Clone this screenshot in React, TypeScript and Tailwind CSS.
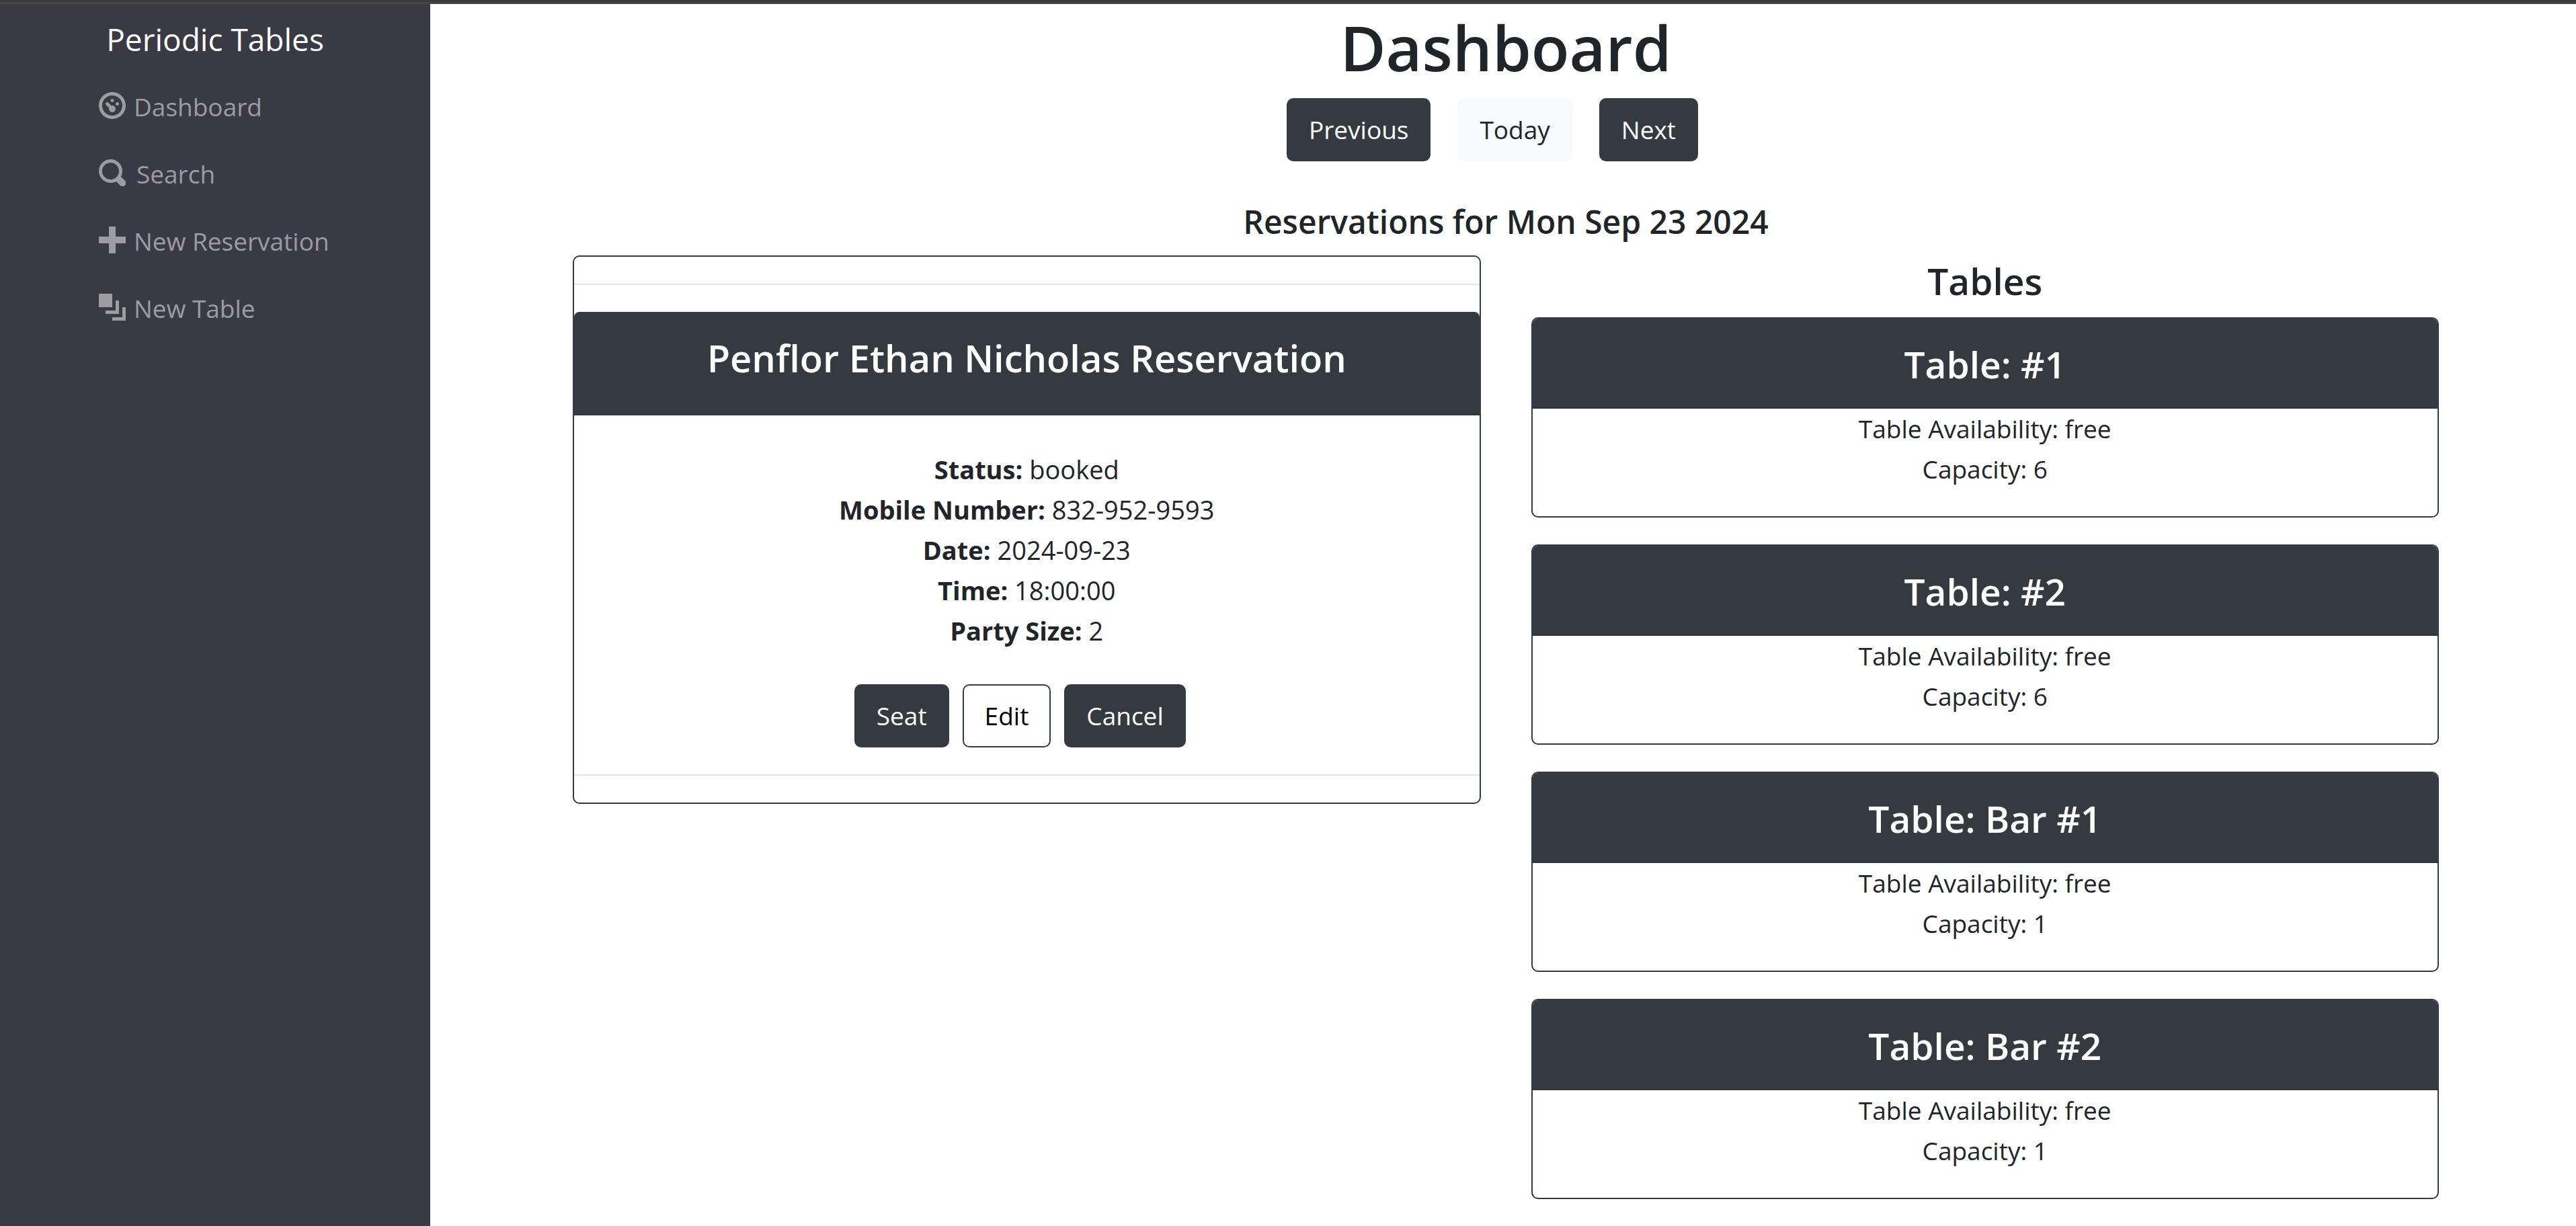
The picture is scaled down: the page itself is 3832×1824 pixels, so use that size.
import React from "react";

type IconProps = { children: React.ReactNode };

function Icon({ children }: IconProps) {
  return (
    <svg viewBox="0 0 8 8" className="size-10 shrink-0 fill-current" aria-hidden="true">
      {children}
    </svg>
  );
}

const links = [
  {
    label: "Dashboard",
    gap: "gap-3",
    icon: (
      <path d="M4 0c-2.200 0-4 1.800-4 4s1.800 4 4 4 4-1.800 4-4-1.800-4-4-4zm0 1c1.660 0 3 1.340 3 3s-1.340 3-3 3-3-1.340-3-3 1.340-3 3-3zm0 1c-.28 0-.5.220-.5.5s.220.5.5.5.500-.220.500-.5-.220-.5-.5-.5zm-1.660 1a.5.5 0 0 0-.19.840l.910.910c-.020.080-.060.160-.060.250 0 .55.450 1 1 1s1-.450 1-1-.450-1-1-1c-.090 0-.170.040-.250.060l-.910-.910a.5.5 0 0 0-.440-.160.5.5 0 0 0-.060 0zm3.160 0c-.28 0-.5.220-.5.500s.220.500.500.500.500-.220.500-.500-.220-.500-.500-.500z" />
    ),
  },
  {
    label: "Search",
    gap: "gap-4",
    icon: (
      <path d="M3.500 0c-1.930 0-3.500 1.570-3.500 3.500s1.570 3.500 3.500 3.500c.590 0 1.170-.140 1.660-.410a1 1 0 0 0 .130.130l1 1a1.020 1.020 0 1 0 1.440-1.440l-1-1a1 1 0 0 0-.160-.130c.270-.490.440-1.060.440-1.660 0-1.930-1.550-3.500-3.500-3.500zm0 1c1.390 0 2.500 1.110 2.500 2.500 0 .660-.240 1.270-.660 1.720-.010.010-.020.020-.030.030a1 1 0 0 0-.130.130c-.440.400-1.040.630-1.690.630-1.390 0-2.500-1.110-2.500-2.500s1.110-2.500 2.500-2.500z" />
    ),
  },
  { label: "New Reservation", gap: "gap-3", icon: <path d="M3 0v3h-3v2h3v3h2v-3h3v-2h-3v-3h-2z" /> },
  {
    label: "New Table",
    gap: "gap-3",
    icon: <path d="M0 0v4h4v-4h-4zm5 2v3h-3v1h4v-4h-1zm2 2v3h-3v1h4v-4h-1z" />,
  },
];

const details = [
  ["Status:", "booked"],
  ["Mobile Number:", "832-952-9593"],
  ["Date:", "2024-09-23"],
  ["Time:", "18:00:00"],
  ["Party Size:", "2"],
];

const tables = [
  { name: "#1", capacity: 6 },
  { name: "#2", capacity: 6 },
  { name: "Bar #1", capacity: 1 },
  { name: "Bar #2", capacity: 1 },
];

const button = "flex h-[94px] items-center justify-center rounded-[10px] border-2 px-[31px]";
const dark = "border-[#343a40] bg-[#343a40] text-white";

export default function App() {
  return (
    <div className="flex min-h-screen flex-col bg-white font-['Open_Sans','Noto_Sans',sans-serif] text-[37px]/[60px] text-[#212529]">
      <div className="h-[6px] border-b-[3px] border-[#454545] bg-[#3b3b3b]" />
      <div className="flex grow">
        <nav className="w-1/6 min-w-[640px] bg-[#3a3a44] pt-5">
          <a href="#" className="block text-center text-[46px]/[64px] text-white">
            Periodic Tables
          </a>
          <ul className="mt-7 flex flex-col gap-10 pl-[147px] text-[#9c9ca1]">
            {links.map((link) => (
              <li key={link.label}>
                <a href="#" className={`flex h-[60px] items-start pt-[19px] ${link.gap}`}>
                  <Icon>{link.icon}</Icon>
                  <span className="leading-[44px]">{link.label}</span>
                </a>
              </li>
            ))}
          </ul>
        </nav>

        <main className="flex grow justify-center px-8 pl-10">
          <div className="w-full max-w-[2776px] text-center">
            <h1 className="pt-1 text-[93px]/[120px] font-semibold">Dashboard</h1>
            <div className="mt-4 flex justify-center gap-10 pr-10">
              <button className={`${button} ${dark}`}>Previous</button>
              <button className={`${button} border-[#f8f9fa] bg-[#f8f9fa]`}>Today</button>
              <button className={`${button} ${dark}`}>Next</button>
            </div>
            <h2 className="mt-[60px] text-[48px]/[60px] font-semibold">Reservations for Mon Sep 23 2024</h2>

            <div className="mt-5 grid grid-cols-2 items-start gap-[75px]">
              <section className="rounded-[10px] border-2 border-[#343a40]">
                <hr className="mt-10 border-t-2 border-[#e5e5e5]" />
                <div className="mt-10 h-[154px] rounded-t-[8px] border-b-2 border-[#2f3338] bg-[#343a40] pt-8">
                  <h3 className="text-[56px]/[72px] font-semibold text-white">
                    Penflor Ethan Nicholas Reservation
                  </h3>
                </div>
                <div className="pt-[50px] text-[38px]/[60px]">
                  {details.map(([label, value]) => (
                    <p key={label}>
                      <strong className="font-bold">{label}</strong> {value}
                    </p>
                  ))}
                </div>
                <div className="mt-[50px] flex justify-center gap-5 pr-5">
                  <button className={`${button} ${dark}`}>Seat</button>
                  <button className={`${button} border-[#343a40] bg-white text-black`}>Edit</button>
                  <button className={`${button} ${dark}`}>Cancel</button>
                </div>
                <hr className="mt-10 mb-10 border-t-2 border-[#e5e5e5]" />
              </section>

              <section>
                <h3 className="pt-0.5 text-[55px]/[72px] font-semibold">Tables</h3>
                <div className="mt-[18px] flex flex-col gap-10">
                  {tables.map((table) => (
                    <article key={table.name} className="overflow-hidden rounded-[10px] border-2 border-[#343a40]">
                      <div className="h-[134px] border-b-2 border-[#2f3338] bg-[#343a40] pt-8">
                        <h4 className="text-[55px]/[72px] font-semibold text-white">Table: {table.name}</h4>
                      </div>
                      <p>Table Availability: free</p>
                      <p className="mb-10">Capacity: {table.capacity}</p>
                    </article>
                  ))}
                </div>
              </section>
            </div>
          </div>
        </main>
      </div>
    </div>
  );
}
